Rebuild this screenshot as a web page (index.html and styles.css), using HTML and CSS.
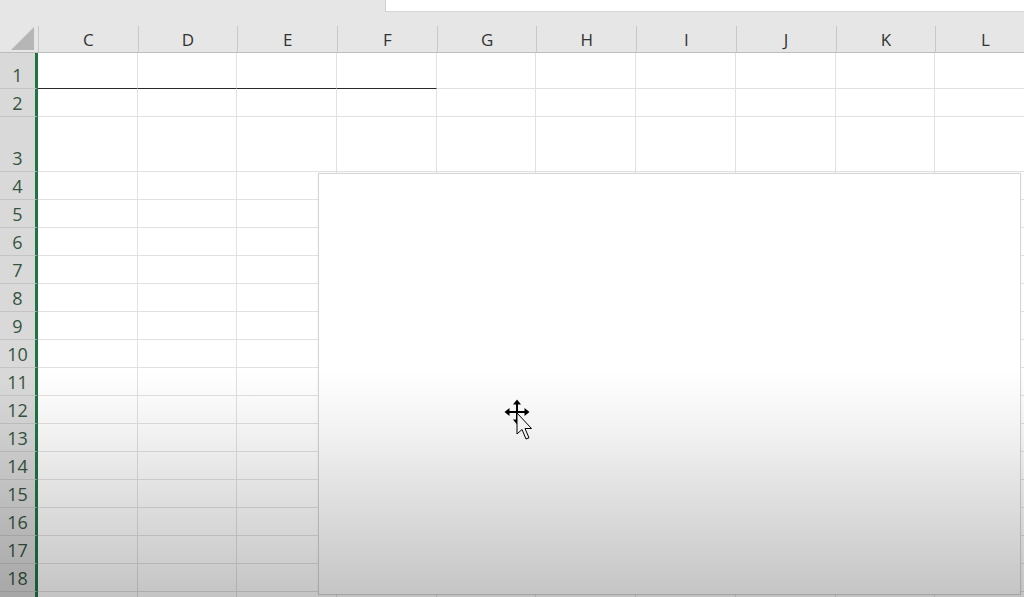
FILE: index.html
```html
<!DOCTYPE html>
<html lang="en">
<head>
  <meta charset="UTF-8" />
  <title>Sheet</title>
  <link rel="stylesheet" href="styles.css">
</head>
<body>
  <div class="topbar">
    <div class="topbar-left"></div>
    <div class="formula"></div>
  </div>
  <div class="spacer"></div>
  <div class="sheet" id="sheet">
    <div class="corner"></div>
    <div class="chart"></div>
    <svg class="cursor" width="34" height="46" viewBox="0 0 34 46">
      <g stroke="#000" stroke-width="2">
        <line x1="13" y1="4" x2="13" y2="22" />
        <line x1="4" y1="13" x2="22" y2="13" />
      </g>
      <g fill="#000">
        <polygon points="13,0.5 9,5.5 17,5.5" />
        <polygon points="0.5,13 5.5,9 5.5,17" />
        <polygon points="25.5,13 20.5,9 20.5,17" />
        <polygon points="13,25.5 9,20.5 17,20.5" />
      </g>
      <path d="M13 14 L13 35 L18 30.5 L22 40 L25 38.8 L21 29.5 L27.5 29.5 Z" fill="#fff" stroke="#000" stroke-width="1" stroke-linejoin="round" />
    </svg>
  </div>
  <div class="shade"></div>

  <script>
    const sheet = document.getElementById('sheet');
    const cols = ['C', 'D', 'E', 'F', 'G', 'H', 'I', 'J', 'K', 'L'];
    const heights = [36, 28, 55];

    cols.forEach(c => {
      const head = document.createElement('div');
      head.className = 'col-head';
      head.textContent = c;
      sheet.appendChild(head);
    });

    for (let r = 1; r <= 19; r++) {
      const h = heights[r - 1] || 28;
      const rowHead = document.createElement('div');
      rowHead.className = 'row-head';
      rowHead.style.height = h + 'px';
      // row 19 is only a sliver at the bottom edge, its number is out of view
      if (r < 19) rowHead.textContent = r;
      sheet.appendChild(rowHead);

      for (let i = 0; i < cols.length; i++) {
        const cell = document.createElement('div');
        cell.className = 'cell';
        if (r === 1 && i < 4) cell.classList.add('underline');
        cell.style.height = h + 'px';
        sheet.appendChild(cell);
      }
    }
  </script>
</body>
</html>
```

FILE: styles.css
```css
body {
  margin: 0;
  width: 1024px;
  height: 597px;
  overflow: hidden;
  background: #e6e6e6;
  font-family: 'Open Sans', 'Noto Sans', sans-serif;
  position: relative;
}
.topbar {
  display: flex;
  height: 12px;
}
.topbar-left {
  width: 385px;
  background: #e6e6e6;
}
.formula {
  flex: 1;
  background: #fff;
  border-left: 1px solid #d0d0d0;
  border-bottom: 1px solid #d6d6d6;
}
.spacer {
  height: 14px;
}
.sheet {
  position: relative;
  display: grid;
  grid-template-columns: 38px repeat(10, 99.7px);
  width: 1036px;
  background: #fff;
}
.corner {
  position: relative;
  height: 27px;
  background: #e6e6e6;
  border-bottom: 1px solid #bdbdbd;
  box-sizing: border-box;
}
.corner::after {
  content: '';
  position: absolute;
  left: 11px;
  top: 1px;
  width: 23px;
  height: 23px;
  background: #b6b6b6;
  clip-path: polygon(100% 0, 100% 100%, 0 100%);
}
.col-head {
  height: 27px;
  box-sizing: border-box;
  background: #e6e6e6;
  border-left: 1px solid #c8c8c8;
  border-bottom: 1px solid #bdbdbd;
  color: #333;
  font-size: 17px;
  display: flex;
  align-items: center;
  justify-content: center;
  padding-top: 1px;
}
.row-head {
  box-sizing: border-box;
  background: #d9d9d9;
  border-right: 3px solid #217346;
  border-bottom: 1px solid #c4c4c4;
  color: #35553f;
  font-size: 18px;
  line-height: 20px;
  display: flex;
  align-items: flex-end;
  justify-content: center;
  padding-bottom: 3px;
}
.cell {
  box-sizing: border-box;
  border-right: 1px solid #e1e1e1;
  border-bottom: 1px solid #e1e1e1;
}
.cell.underline {
  border-bottom: 1px solid #2a2a2a;
}
.chart {
  position: absolute;
  left: 318px;
  top: 147px;
  width: 703px;
  height: 422px;
  box-sizing: border-box;
  background: #fff;
  border: 1px solid #d6d6d6;
  box-shadow: 0 0 2px rgba(0, 0, 0, 0.08);
}
.cursor {
  position: absolute;
  left: 504px;
  top: 373px;
}
.shade {
  position: absolute;
  inset: 0;
  pointer-events: none;
  background: linear-gradient(to bottom, rgba(0, 0, 0, 0) 0, rgba(0, 0, 0, 0) 370px, rgba(0, 0, 0, 0.05) 430px, rgba(0, 0, 0, 0.23) 597px);
}
```
